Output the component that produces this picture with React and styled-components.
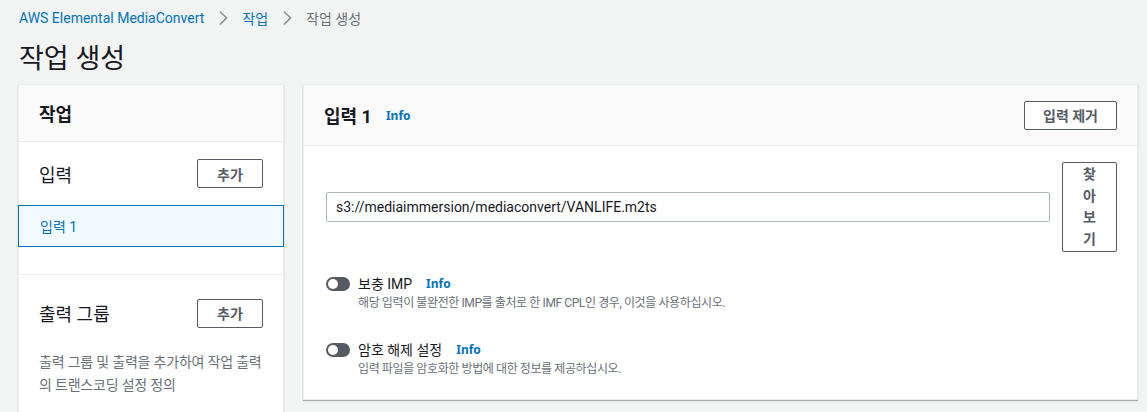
import React from "react";
import styled, { createGlobalStyle } from "styled-components";

const Global = createGlobalStyle`
  html, body { margin: 0; padding: 0; }
  body {
    background: #f2f3f3;
    font-family: Roboto, "Noto Sans CJK KR", sans-serif;
    color: #16191f;
    -webkit-font-smoothing: antialiased;
  }
  * { box-sizing: border-box; }
`;

const Page = styled.div`
  padding: 0 9px 0 19px;
  height: 412px;
  overflow: hidden;
`;

const Crumbs = styled.nav`
  display: flex;
  align-items: center;
  height: 36px;
  font-size: 14px;
  gap: 13px;
`;

const CrumbLink = styled.a`
  color: #0073bb;
  text-decoration: none;
`;

const CrumbCurrent = styled.span`
  color: #687078;
`;

const Chevron = () => (
  <svg width="12" height="16" viewBox="0 0 12 16" aria-hidden="true">
    <path d="M3 1.5 L9.5 8 L3 14.5" fill="none" stroke="#879196" strokeWidth="1.6" />
  </svg>
);

const Title = styled.h1`
  margin: 0 0 8px;
  height: 40px;
  display: flex;
  align-items: center;
  font-size: 27px;
  font-weight: 400;
  color: #16191f;
`;

const Columns = styled.div`
  display: grid;
  grid-template-columns: 266px 1fr;
  gap: 19px;
  align-items: start;
  margin-left: -1px;
`;

const Panel = styled.section`
  background: #fff;
  border: 1px solid #eaeded;
  box-shadow: 0 1px 1px 0 rgba(0, 28, 36, 0.3);
`;

const PanelHeader = styled.header`
  display: flex;
  align-items: center;
  justify-content: space-between;
  background: #fafafa;
  border-bottom: 1px solid #eaeded;
  height: ${(p) => p.$h}px;
  padding: 0 20px;
`;

const HeaderTitle = styled.h2`
  margin: 0;
  font-size: 18px;
  font-weight: 700;
  display: flex;
  align-items: center;
  gap: 14px;
`;

const Info = styled.a`
  color: #0073bb;
  font-size: 12px;
  font-weight: 700;
  text-decoration: none;
  font-family: "Noto Sans", Roboto, sans-serif;
  letter-spacing: 0;
`;

const SideSection = styled.div`
  display: flex;
  align-items: center;
  justify-content: space-between;
  padding: 0 20px;
  height: ${(p) => p.$h}px;
`;

const SideLabel = styled.span`
  font-size: 18px;
`;

const Button = styled.button`
  font-family: inherit;
  background: #fff;
  border: 1px solid #545b64;
  border-radius: 2px;
  color: #545b64;
  font-weight: 700;
  font-size: 14px;
  height: 29px;
  padding: ${(p) => (p.$w ? "0" : "0 18px")};
  width: ${(p) => (p.$w ? `${p.$w}px` : "auto")};
  white-space: nowrap;
  cursor: pointer;
`;

const BrowseButton = styled(Button)`
  height: 90px;
  width: 55px;
  flex: none;
  padding: 0 20px;
  line-height: 21.5px;
  white-space: normal;
  word-break: break-all;
`;

const NavItem = styled.div`
  margin: 0 -1px;
  height: 42px;
  display: flex;
  align-items: center;
  padding: 0 21px;
  background: #f1faff;
  border: 1px solid #0073bb;
  color: #0073bb;
  font-size: 14px;
`;

const Divider = styled.hr`
  margin: 27px 0 0;
  border: none;
  border-top: 1px solid #eaeded;
`;

const Helper = styled.p`
  margin: 0;
  padding: 0 20px 40px;
  font-size: 14px;
  line-height: 23px;
  color: #687078;
  word-break: break-all;
  letter-spacing: -0.2px;
`;

const Body = styled.div`
  padding: 16px 20px 22px 22px;
  display: flex;
  flex-direction: column;
`;

const InputRow = styled.div`
  display: flex;
  align-items: center;
  gap: 12px;
`;

const TextInput = styled.input`
  flex: 1;
  height: 30px;
  border: 1px solid #aab7b8;
  border-radius: 2px;
  padding: 0 9px;
  font-family: inherit;
  font-size: 14px;
  color: #16191f;
  outline: none;
`;

const ToggleRow = styled.div`
  display: flex;
  gap: 8px;
  margin-top: ${(p) => p.$mt}px;
`;

const Track = styled.span`
  flex: none;
  width: 24px;
  height: 14px;
  margin-top: 3px;
  border-radius: 7px;
  background: #545b64;
  position: relative;
  &::after {
    content: "";
    position: absolute;
    left: 2px;
    top: 2px;
    width: 10px;
    height: 10px;
    border-radius: 50%;
    background: #fff;
  }
`;

const ToggleText = styled.div`
  display: flex;
  flex-direction: column;
  gap: 1px;
`;

const ToggleLabel = styled.div`
  font-size: 14px;
  line-height: 20px;
  display: flex;
  align-items: center;
  gap: 14px;
`;

const ToggleDesc = styled.div`
  font-size: 12px;
  line-height: 16px;
  color: #687078;
  letter-spacing: -0.4px;
`;

export default function App() {
  return (
    <>
      <Global />
      <Page>
        <Crumbs>
          <CrumbLink href="#">AWS Elemental MediaConvert</CrumbLink>
          <Chevron />
          <CrumbLink href="#">작업</CrumbLink>
          <Chevron />
          <CrumbCurrent>작업 생성</CrumbCurrent>
        </Crumbs>
        <Title>작업 생성</Title>
        <Columns>
          <Panel>
            <PanelHeader $h={57}>
              <HeaderTitle>작업</HeaderTitle>
            </PanelHeader>
            <SideSection $h={63}>
              <SideLabel>입력</SideLabel>
              <Button $w={66}>추가</Button>
            </SideSection>
            <NavItem>입력 1</NavItem>
            <Divider />
            <SideSection $h={76}>
              <SideLabel>출력 그룹</SideLabel>
              <Button $w={66}>추가</Button>
            </SideSection>
            <Helper>출력 그룹 및 출력을 추가하여 작업 출력의 트랜스코딩 설정 정의</Helper>
          </Panel>
          <Panel>
            <PanelHeader $h={61}>
              <HeaderTitle>
                입력 1 <Info href="#">Info</Info>
              </HeaderTitle>
              <Button>입력 제거</Button>
            </PanelHeader>
            <Body>
              <InputRow>
                <TextInput readOnly value="s3://mediaimmersion/mediaconvert/VANLIFE.m2ts" />
                <BrowseButton>찾아보기</BrowseButton>
              </InputRow>
              <ToggleRow $mt={22}>
                <Track />
                <ToggleText>
                  <ToggleLabel>
                    보충 IMP <Info href="#">Info</Info>
                  </ToggleLabel>
                  <ToggleDesc>해당 입력이 불완전한 IMP를 출처로 한 IMF CPL인 경우, 이것을 사용하십시오.</ToggleDesc>
                </ToggleText>
              </ToggleRow>
              <ToggleRow $mt={29}>
                <Track />
                <ToggleText>
                  <ToggleLabel>
                    암호 해제 설정 <Info href="#">Info</Info>
                  </ToggleLabel>
                  <ToggleDesc>입력 파일을 암호화한 방법에 대한 정보를 제공하십시오.</ToggleDesc>
                </ToggleText>
              </ToggleRow>
            </Body>
          </Panel>
        </Columns>
      </Page>
    </>
  );
}
